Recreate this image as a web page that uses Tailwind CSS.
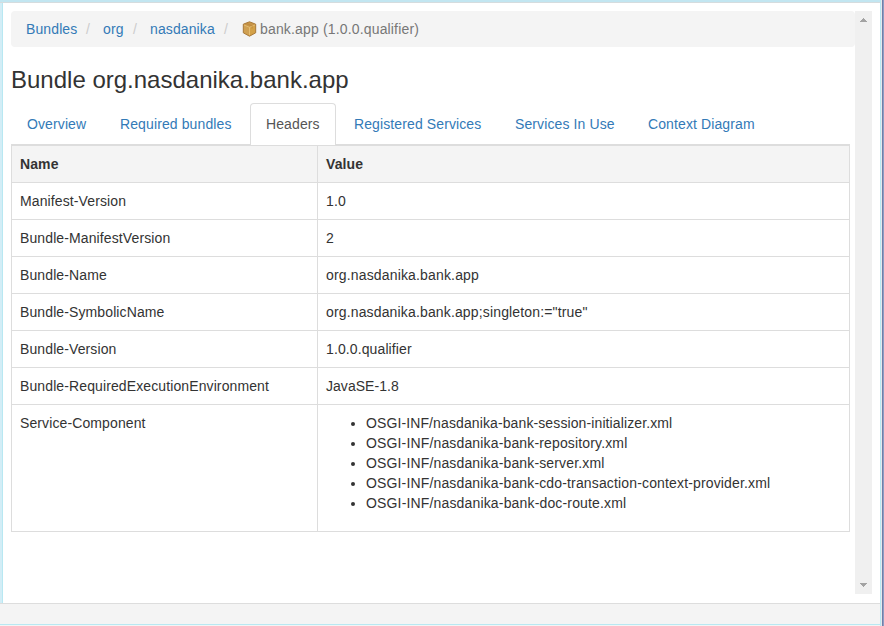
<!DOCTYPE html>
<html lang="en">
<head>
<meta charset="utf-8">
<title>Bundle org.nasdanika.bank.app</title>
<script src="https://cdn.jsdelivr.net/npm/@tailwindcss/browser@4"></script>
</head>
<body class="w-[884px] h-[626px] overflow-hidden bg-white text-[#333] text-[14px] leading-5 tracking-[0.11px] font-['Liberation_Sans',Arial,sans-serif]">
<div class="flex h-[626px]">
  <div class="w-[880px] h-[626px] flex flex-col">
    <div class="h-[3px] shrink-0 bg-[#c2e6f1] border-b border-[#d5dcde]"></div>
    <div class="h-[600px] flex border-l-2 border-[#d3edf6]">
      <div class="w-px bg-[#b8e8f2]"></div>
      <main class="w-[852px] pl-2 pt-2">
        <nav class="h-9 w-[844px] rounded bg-[#f4f4f4] pl-[15px] flex items-center whitespace-nowrap text-[#777]">
          <a class="w-[60px] text-[#337ab7]">Bundles</a><span class="w-[17px] text-[#ccc]">/</span>
          <a class="w-[30px] text-[#337ab7]">org</a><span class="w-[17px] text-[#ccc]">/</span>
          <a class="w-[74px] text-[#337ab7]">nasdanika</a><span class="w-[18px] text-[#ccc]">/</span>
          <svg class="w-4 h-4 mr-0.5" viewBox="0 0 16 16">
            <path d="M7.5 .8 L13.7 3.2 V11.8 L7.5 15.2 L1.3 11.8 V3.2Z" fill="#c8923c" stroke="#a87a3c"/>
            <path d="M7.5 1.5 L13 3.7 L7.5 6 L2 3.7Z" fill="#c8964a"/>
            <path d="M2 4.2 L7.2 6.4 V14.2 L2 11.4Z" fill="#cfa052"/>
            <path d="M7.8 6.4 L13 4.2 V11.4 L7.8 14.2Z" fill="#d3a148"/>
            <path d="M7.5 6.3 V14.3 M2 4 L7.5 6.3 L13 4" stroke="#e9c681" stroke-width=".8" fill="none"/>
            <path d="M4 2.9 L9.5 5.4 V8 L11 7.2 V4.7 L5.5 2.3" fill="#b27c31" opacity=".35"/>
          </svg><span class="tracking-[0.16px]">bank.app (1.0.0.qualifier)</span>
        </nav>
        <h3 class="mt-5 h-[26px] leading-[26px] text-[24px] tracking-normal">Bundle org.nasdanika.bank.app</h3>
        <div class="w-[839px] mt-[10px] h-[42px] flex border-b border-[#ddd] whitespace-nowrap">
          <a class="w-[93px] pl-4 pt-[11px] text-[#337ab7]">Overview</a>
          <a class="w-[146px] pl-4 pt-[11px] text-[#337ab7]">Required bundles</a>
          <a class="w-[86px] h-[42px] pl-[15px] pt-[10px] bg-white border border-b-0 border-[#ddd] rounded-t text-[#555]">Headers</a>
          <a class="w-[163px] ml-0.5 pl-4 pt-[11px] text-[#337ab7]">Registered Services</a>
          <a class="w-[133px] pl-[14px] pt-[11px] text-[#337ab7]">Services In Use</a>
          <a class="pl-[14px] pt-[11px] text-[#337ab7]">Context Diagram</a>
        </div>
        <table class="w-[839px] table-fixed border-separate border-spacing-0 border-t border-l border-[#ddd] [&_td]:border-r [&_td]:border-b [&_td]:border-[#ddd] [&_td]:p-2 [&_td]:align-top [&_th]:border-r [&_th]:border-b [&_th]:border-[#ddd] [&_th]:p-2 [&_th]:text-left">
          <colgroup><col class="w-[306px]"><col></colgroup>
          <thead><tr class="bg-[#f4f4f4]"><th>Name</th><th>Value</th></tr></thead>
          <tbody>
          <tr><td>Manifest-Version</td><td>1.0</td></tr>
          <tr><td>Bundle-ManifestVersion</td><td>2</td></tr>
          <tr><td>Bundle-Name</td><td class="tracking-[0.16px]">org.nasdanika.bank.app</td></tr>
          <tr><td>Bundle-SymbolicName</td><td class="tracking-[0.15px]">org.nasdanika.bank.app;singleton:="true"</td></tr>
          <tr><td>Bundle-Version</td><td>1.0.0.qualifier</td></tr>
          <tr><td>Bundle-RequiredExecutionEnvironment</td><td class="tracking-[0.04px]">JavaSE-1.8</td></tr>
          <tr><td>Service-Component</td><td>
            <ul class="list-disc pl-10 mb-[10px]">
              <li>OSGI-INF/nasdanika-bank-session-initializer.xml</li>
              <li class="tracking-[0.15px]">OSGI-INF/nasdanika-bank-repository.xml</li>
              <li class="tracking-[0.15px]">OSGI-INF/nasdanika-bank-server.xml</li>
              <li class="tracking-[0.15px]">OSGI-INF/nasdanika-bank-cdo-transaction-context-provider.xml</li>
              <li class="tracking-[0.16px]">OSGI-INF/nasdanika-bank-doc-route.xml</li>
            </ul></td></tr>
          </tbody>
        </table>
      </main>
      <div class="w-[17px] h-[583px] mt-2 bg-[#f0f0f0] flex flex-col justify-between items-center py-[7px]">
        <svg class="w-[7px] h-1" viewBox="0 0 7 4" shape-rendering="crispEdges"><path d="M3 0h1v1h1v1h1v1h1v1H0V3h1V2h1V1h1z" fill="#a3a3a3"/></svg>
        <svg class="w-[7px] h-1" viewBox="0 0 7 4" shape-rendering="crispEdges"><path d="M3 4h1V3h1V2h1V1h1V0H0v1h1v1h1v1h1z" fill="#a3a3a3"/></svg>
      </div>
    </div>
    <div class="h-[21px] bg-[#f4f4f4] border-t border-[#ddd]"></div>
    <div class="h-px bg-[#b8e8f2]"></div>
    <div class="h-px bg-[#f4f4f4]"></div>
  </div>
  <div class="w-px bg-[#b8e8f2]"></div>
  <div class="w-px bg-[#e5e8ec]"></div>
  <div class="w-px bg-[#6f7fa8]"></div>
  <div class="w-px bg-[#8e9cc4]"></div>
</div>
</body>
</html>
